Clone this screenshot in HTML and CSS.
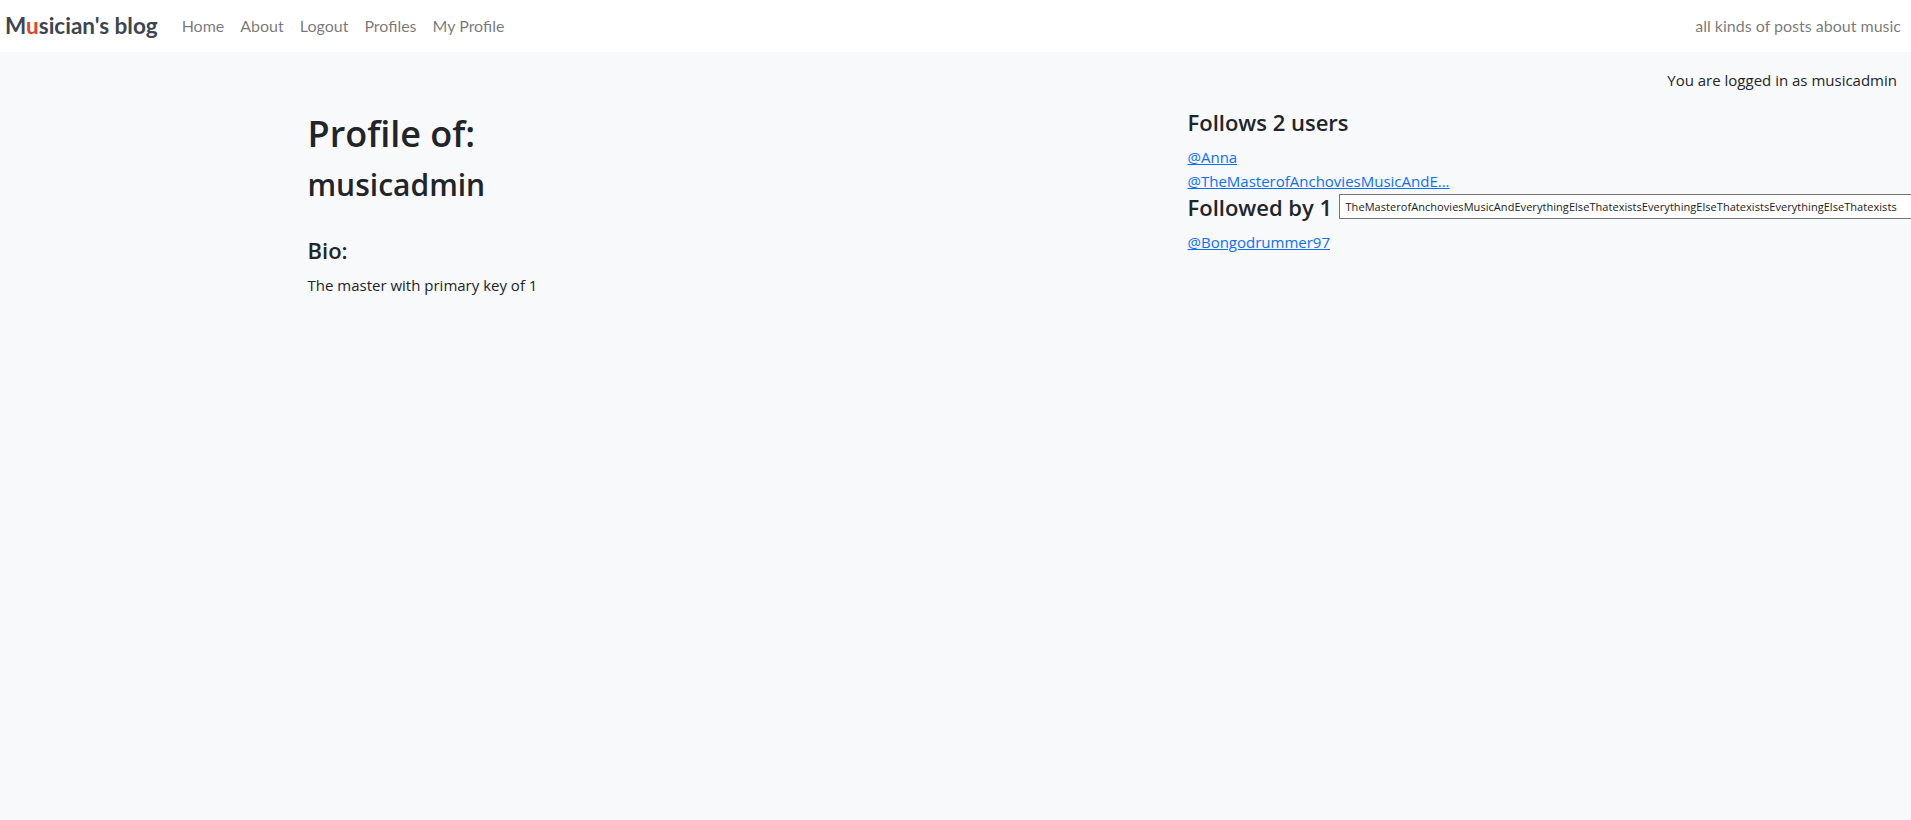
FILE: index.html
```html
<!DOCTYPE html>
<html lang="en">
<head>
<meta charset="utf-8">
<title>Musician's blog</title>
<link rel="stylesheet" href="styles.css">
</head>
<body>
<nav class="navbar">
  <a class="brand" href="#">M<span class="brand-accent">u</span>sician's blog</a>
  <ul class="nav-links">
    <li><a href="#">Home</a></li>
    <li><a href="#">About</a></li>
    <li><a href="#">Logout</a></li>
    <li><a href="#">Profiles</a></li>
    <li><a href="#">My Profile</a></li>
  </ul>
  <span class="tagline">all kinds of posts about music</span>
</nav>
<main class="page">
  <p class="logged">You are logged in as musicadmin</p>
  <div class="container">
    <div class="row">
      <section class="col col-main">
        <h1 class="title">Profile of:</h1>
        <h2 class="username">musicadmin</h2>
        <br>
        <h4 class="subhead">Bio:</h4>
        <p class="bio">The master with primary key of 1</p>
      </section>
      <aside class="col col-side">
        <h4 class="subhead">Follows 2 users</h4>
        <div class="user-link"><a href="#">@Anna</a></div>
        <div class="user-link"><a href="#" title="TheMasterofAnchoviesMusicAndEverythingElseThatexistsEverythingElseThatexistsEverythingElseThatexists">@TheMasterofAnchoviesMusicAndE...</a></div>
        <div class="follow-block">
          <h4 class="subhead">Followed by 1</h4>
          <div class="tooltip">TheMasterofAnchoviesMusicAndEverythingElseThatexistsEverythingElseThatexistsEverythingElseThatexists</div>
        </div>
        <div class="user-link"><a href="#">@Bongodrummer97</a></div>
      </aside>
    </div>
  </div>
</main>
</body>
</html>
```
FILE: styles.css
```css
html {
  overflow: hidden;
}
body {
  margin: 0;
  background: #f8f9fa;
  color: #212529;
  font-family: "Open Sans", "Noto Sans", sans-serif;
  font-size: 15px;
  line-height: 24px;
}
.navbar {
  display: flex;
  align-items: center;
  height: 52px;
  background: #ffffff;
  padding: 0 10px 0 5px;
  box-sizing: border-box;
  font-family: Lato, sans-serif;
}
.brand {
  font-size: 22.5px;
  font-weight: 700;
  color: #3d4651;
  text-decoration: none;
  margin-right: 16px;
}
.brand-accent {
  color: #e8401c;
}
.nav-links {
  display: flex;
  list-style: none;
  margin: 0;
  padding: 0;
  flex: 1;
}
.nav-links a {
  display: block;
  padding: 8px;
  color: rgba(0, 0, 0, 0.55);
  text-decoration: none;
  font-size: 16px;
}
.tagline {
  color: rgba(0, 0, 0, 0.55);
  font-size: 16px;
}
.page {
  padding-top: 16px;
}
.logged {
  margin: 0 14px 16px 0;
  text-align: right;
}
.container {
  box-sizing: border-box;
  max-width: 1320px;
  margin: 0 auto;
}
.row {
  display: grid;
  grid-template-columns: 2fr 1fr;
}
.col {
  padding: 0 12px;
  min-width: 0;
}
.col-main {
  padding-top: 2px;
}
.title {
  font-size: 36px;
  font-weight: 600;
  line-height: 48px;
  margin: 0 0 8px;
}
.username {
  font-size: 30px;
  font-weight: 600;
  line-height: 38px;
  margin: 0 0 8px;
}
.subhead {
  font-size: 22px;
  font-weight: 600;
  line-height: 29px;
  margin: 0 0 8px;
}
.bio {
  margin: 0;
}
.user-link a {
  color: #0d6efd;
  text-decoration: underline;
}
.follow-block {
  position: relative;
}
.tooltip {
  position: absolute;
  left: 151px;
  top: 1px;
  width: 640px;
  height: 25px;
  box-sizing: border-box;
  padding: 0 6px;
  background: #ffffff;
  border: 1px solid #767676;
  font-size: 11px;
  letter-spacing: 0.05px;
  line-height: 23px;
  color: #1a1a1a;
  white-space: nowrap;
}
```
